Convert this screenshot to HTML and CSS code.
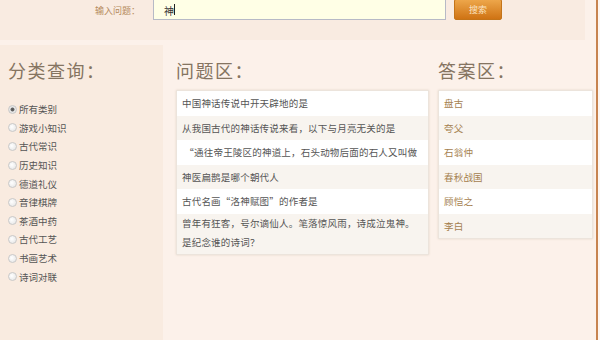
FILE: index.html
```html
<!DOCTYPE html>
<html lang="zh-CN">
<head>
    <meta charset="UTF-8">
    <title>问答搜索</title>
    <link rel="stylesheet" href="styles.css">
</head>
<body>
    <div class="page">
        <div class="search-bar">
            <label class="search-label" for="q">输入问题：</label>
            <div class="search-input" id="q">神<span class="caret"></span></div>
            <button class="search-btn">搜索</button>
        </div>

        <div class="content">
            <div class="sidebar">
                <h2>分类查询：</h2>
                <label class="cat"><input type="radio" name="cat" checked>所有类别</label>
                <label class="cat"><input type="radio" name="cat">游戏小知识</label>
                <label class="cat"><input type="radio" name="cat">古代常识</label>
                <label class="cat"><input type="radio" name="cat">历史知识</label>
                <label class="cat"><input type="radio" name="cat">德道礼仪</label>
                <label class="cat"><input type="radio" name="cat">音律棋牌</label>
                <label class="cat"><input type="radio" name="cat">茶酒中药</label>
                <label class="cat"><input type="radio" name="cat">古代工艺</label>
                <label class="cat"><input type="radio" name="cat">书画艺术</label>
                <label class="cat"><input type="radio" name="cat">诗词对联</label>
            </div>

            <div class="questions">
                <h2>问题区：</h2>
                <ul class="list">
                    <li>中国神话传说中开天辟地的是</li>
                    <li>从我国古代的神话传说来看，以下与月亮无关的是</li>
                    <li>&nbsp;“通往帝王陵区的神道上，石头动物后面的石人又叫做</li>
                    <li>神医扁鹊是哪个朝代人</li>
                    <li>古代名画“洛神赋图”的作者是</li>
                    <li class="tall">曾年有狂客，号尔谪仙人。笔落惊风雨，诗成泣鬼神。<br>是纪念谁的诗词？</li>
                </ul>
            </div>

            <div class="answers">
                <h2>答案区：</h2>
                <ul class="list">
                    <li>盘古</li>
                    <li>夸父</li>
                    <li>石翁仲</li>
                    <li>春秋战国</li>
                    <li>顾恺之</li>
                    <li>李白</li>
                </ul>
            </div>
        </div>
    </div>
</body>
</html>
```

FILE: styles.css
```css
* {
    margin: 0;
    padding: 0;
    box-sizing: border-box;
}

body {
    width: 600px;
    height: 340px;
    overflow: hidden;
    background-color: #fdf6f1;
    font-family: "Liberation Sans", "Noto Sans CJK SC", sans-serif;
    color: #555;
}

.page {
    width: 598px;
    height: 340px;
    background-color: #fcf1ea;
    border-right: 2px solid #c7834f;
}

/* search bar */
.search-bar {
    width: 585px;
    height: 40px;
    background-color: #f9ebe1;
    display: flex;
    align-items: flex-start;
    padding-left: 95px;
}

.search-label {
    width: 52px;
    margin-top: 4px;
    font-size: 9px;
    color: #b58a5c;
}

.search-input {
    width: 293px;
    height: 21px;
    margin-left: 6px;
    margin-top: -1px;
    padding: 3px 0 0 10px;
    background-color: #ffffe6;
    border: 1px solid #b7bac6;
    font-size: 10px;
    color: #333;
    display: flex;
    align-items: flex-start;
}

.caret {
    display: inline-block;
    width: 1px;
    height: 11px;
    margin-top: 1px;
    background-color: #222;
}

.search-btn {
    width: 48px;
    height: 21px;
    margin-left: 8px;
    margin-top: -1px;
    border: 1px solid #c47419;
    border-radius: 2px;
    background: linear-gradient(#eda64a, #cf7314);
    color: #fbe3c0;
    font-family: "Noto Sans CJK SC", sans-serif;
    font-size: 9px;
}

/* columns */
.content {
    display: flex;
    margin-top: 5px;
}

.content h2 {
    font-family: "Noto Sans CJK SC", sans-serif;
    font-weight: normal;
    font-size: 18px;
    line-height: 26px;
    color: #857461;
    letter-spacing: 1.5px;
}

.sidebar {
    width: 163px;
    height: 295px;
    background-color: #f9ebe0;
    padding: 12px 0 0 8px;
    display: flex;
    flex-direction: column;
}

.sidebar h2 {
    margin-bottom: 17px;
}

.cat {
    display: flex;
    align-items: center;
    height: 18.6px;
    font-family: "Noto Sans CJK SC", sans-serif;
    font-size: 9.5px;
    color: #555;
}

.cat input {
    appearance: none;
    width: 9px;
    height: 9px;
    margin-right: 2px;
    border: 1px solid #c9c9c9;
    border-radius: 50%;
    background: radial-gradient(circle at 40% 40%, #fff, #e2e2e2);
}

.cat input:checked {
    background: radial-gradient(circle, #555 0, #666 1.6px, #eee 2.4px, #ddd 4px);
}

.questions {
    width: 253px;
    margin-left: 13px;
    padding-top: 12px;
}

.answers {
    width: 155px;
    margin-left: 9px;
    padding-top: 12px;
}

.list {
    list-style: none;
    margin-top: 7px;
    border: 1px solid #ece4dc;
    background-color: #fff;
    box-shadow: 0 0 2px rgba(200, 180, 160, 0.4);
}

.list li {
    height: 24.5px;
    line-height: 24.5px;
    padding-left: 5px;
    font-family: "Noto Sans CJK SC", sans-serif;
    font-size: 9.5px;
    letter-spacing: 0.2px;
    color: #555;
    white-space: nowrap;
    overflow: hidden;
}

.list li:nth-child(even) {
    background-color: #f8f4ef;
}

.list li.tall {
    height: 40px;
    line-height: 19px;
    padding-top: 0;
}

.answers .list li {
    color: #a5814f;
}
```
